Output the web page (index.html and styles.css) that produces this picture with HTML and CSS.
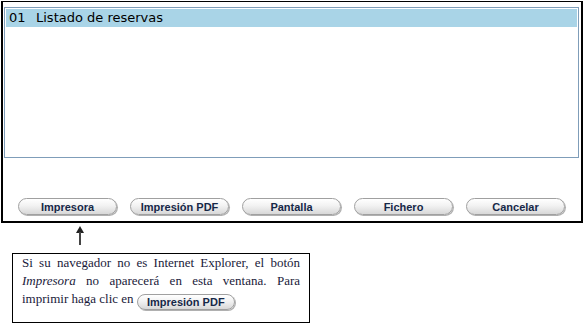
FILE: index.html
```html
<!DOCTYPE html>
<html lang="es">
<head>
    <meta charset="UTF-8">
    <title>Listado de reservas</title>
    <link rel="stylesheet" href="styles.css">
</head>
<body>

<div class="panel">
    <div class="list">
        <div class="list-row selected"><span class="num">01</span>Listado de reservas</div>
    </div>
    <div class="toolbar">
        <button class="btn">Impresora</button>
        <button class="btn">Impresión PDF</button>
        <button class="btn">Pantalla</button>
        <button class="btn">Fichero</button>
        <button class="btn">Cancelar</button>
    </div>
</div>

<div class="pointer">
    <svg width="10" height="20" viewBox="0 0 10 20">
        <path d="M5 1 L9 8 L1 8 Z" fill="#222"/>
        <rect x="4" y="7" width="2" height="13" fill="#444"/>
    </svg>
</div>

<div class="note">
    Si su navegador no es Internet Explorer, el botón <i>Impresora</i> no aparecerá en esta ventana. Para imprimir haga clic en <span class="btn btn-inline">Impresión PDF</span>
</div>

</body>
</html>
```
FILE: styles.css
```css
* {
    margin: 0;
    padding: 0;
    box-sizing: border-box;
}

body {
    background: #fff;
    font-family: "Liberation Sans", Arial, sans-serif;
}

.panel {
    margin: 1px 0 0 1px;
    width: 582px;
    height: 222px;
    border: 2px solid #000;
    border-top-width: 1px;
    padding: 5px 2px 0 1px;
}

.list {
    height: 151px;
    border: 1px solid #7f9db9;
    padding: 1px;
}

.list-row {
    height: 18px;
    line-height: 18px;
    padding-left: 3px;
    font-family: "DejaVu Sans", Verdana, sans-serif;
    font-size: 13px;
    color: #000;
}

.list-row.selected {
    background: #a9d4e7;
}

.list-row .num {
    display: inline-block;
    width: 27px;
}

.toolbar {
    display: flex;
    gap: 13px;
    padding-left: 14px;
    margin-top: 40px;
}

.btn {
    width: 99px;
    height: 17px;
    border: 1px solid #a0a0a0;
    border-radius: 9px;
    background: linear-gradient(#ffffff, #f2f2f2 45%, #d8d8d8);
    box-shadow: 1px 1px 0 #b0b0b0;
    font-family: "Liberation Sans", Arial, sans-serif;
    font-size: 11px;
    font-weight: bold;
    color: #162848;
    cursor: pointer;
}

.pointer {
    margin-left: 75px;
    height: 30px;
    padding-top: 2px;
}

.pointer svg {
    display: block;
}

.note {
    margin-left: 12px;
    width: 298px;
    height: 70px;
    border: 1px solid #000;
    padding: 0 9px;
    font-family: "Liberation Serif", "Times New Roman", serif;
    font-size: 13px;
    line-height: 18px;
    text-align: justify;
    color: #1a1a3a;
}

.btn-inline {
    display: inline-block;
    width: 98px;
    height: 16px;
    line-height: 14px;
    text-align: center;
    vertical-align: -3px;
}
```
